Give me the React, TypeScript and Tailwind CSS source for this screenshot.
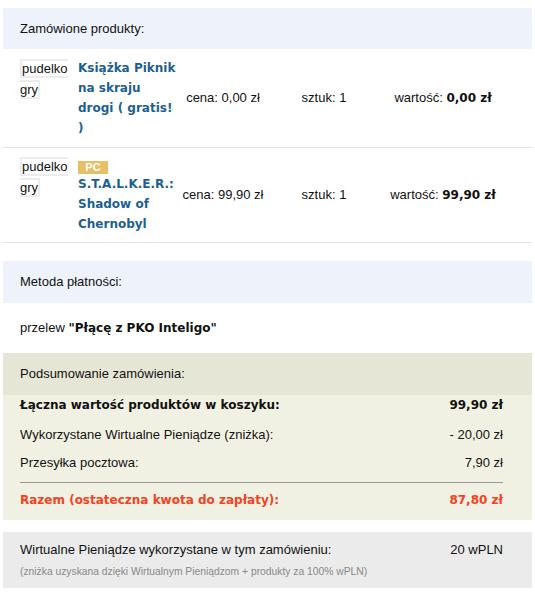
import React from 'react';

interface Product {
  title: string;
  badge?: string;
  price: string;
  qty: number;
  value: string;
}

const products: Product[] = [
  {
    title: 'Książka Piknik na skraju drogi ( gratis! )',
    price: '0,00 zł',
    qty: 1,
    value: '0,00 zł',
  },
  {
    title: 'S.T.A.L.K.E.R.: Shadow of Chernobyl',
    badge: 'PC',
    price: '99,90 zł',
    qty: 1,
    value: '99,90 zł',
  },
];

const bold = "font-['DejaVu_Sans',sans-serif] font-bold text-[12px]";

function ProductRow({ product }: { product: Product }) {
  return (
    <div
      className={`flex items-center border-b border-[#e5e4d8] pl-[17px] ${
        product.badge ? 'py-2' : 'py-[9px]'
      }`}
    >
      <div className="self-start w-[52px] leading-[21px]">
        <span className="border-2 border-[#ececec] bg-white">pudelko gry</span>
      </div>
      <div className="self-start w-[100px] ml-[6px]">
        {product.badge && (
          <div className="mt-[5px] w-[30px] h-[13px] bg-[#e6c066] text-white text-[11px] font-bold leading-[13px] text-center">
            {product.badge}
          </div>
        )}
        <a href="#" className={`block ${bold} text-[#1d5f91] leading-[20px]`}>
          {product.title}
        </a>
      </div>
      <div className="ml-[3px] w-[84px] text-center">cena: {product.price}</div>
      <div className="w-[118px] text-center">sztuk: {product.qty}</div>
      <div className="w-[120px] text-center">
        wartość: <b className={bold}>{product.value}</b>
      </div>
    </div>
  );
}

export default function App() {
  return (
    <div className="w-[535px] pt-2 pb-3 font-['Liberation_Sans',sans-serif] text-[13px] text-[#111] bg-white">
      {/* Products */}
      <div className="mx-[3px]">
        <div className="h-[41px] bg-[#eef3fb] px-[17px] flex items-center">
          Zamówione produkty:
        </div>
        {products.map((p, i) => (
          <ProductRow key={i} product={p} />
        ))}
      </div>

      {/* Payment */}
      <div className="mx-[3px] mt-[18px]">
        <div className="h-[42px] bg-[#eef3fb] px-[17px] flex items-center">
          Metoda płatności:
        </div>
        <div className="h-[50px] px-[17px] flex items-center">
          <span>
            przelew <b className={bold}>"Płącę z PKO Inteligo"</b>
          </span>
        </div>
      </div>

      {/* Summary */}
      <div className="mx-[3px]">
        <div className="h-[42px] bg-[#e6e6d6] px-[17px] flex items-center">
          Podsumowanie zamówienia:
        </div>
        <div className="bg-[#f1f1e3] pl-[17px] pr-[29px] pb-[10px]">
          <div className={`h-[20px] flex items-center justify-between ${bold}`}>
            <span>Łączna wartość produktów w koszyku:</span>
            <span>99,90 zł</span>
          </div>
          <div className="mt-[10px] h-[20px] flex items-center justify-between">
            <span>Wykorzystane Wirtualne Pieniądze (zniżka):</span>
            <span>- 20,00 zł</span>
          </div>
          <div className="mt-[8px] h-[20px] flex items-center justify-between">
            <span>Przesyłka pocztowa:</span>
            <span>7,90 zł</span>
          </div>
          <div className="mt-[9px] h-px bg-[#999]" />
          <div className={`mt-[7px] h-[20px] flex items-center justify-between ${bold} text-[#ef4423]`}>
            <span>Razem (ostateczna kwota do zapłaty):</span>
            <span>87,80 zł</span>
          </div>
        </div>
      </div>

      {/* Virtual money */}
      <div className="mx-[3px] mt-[12px] bg-[#ebebeb] pl-[17px] pr-[29px] pt-[8px] pb-[7px]">
        <div className="h-[20px] flex items-center justify-between">
          <span>Wirtualne Pieniądze wykorzystane w tym zamówieniu:</span>
          <span>20 wPLN</span>
        </div>
        <div className="mt-[3px] text-[10.3px] text-[#888] leading-[18px]">
          (zniżka uzyskana dzięki Wirtualnym Pieniądzom + produkty za 100% wPLN)
        </div>
      </div>
    </div>
  );
}
